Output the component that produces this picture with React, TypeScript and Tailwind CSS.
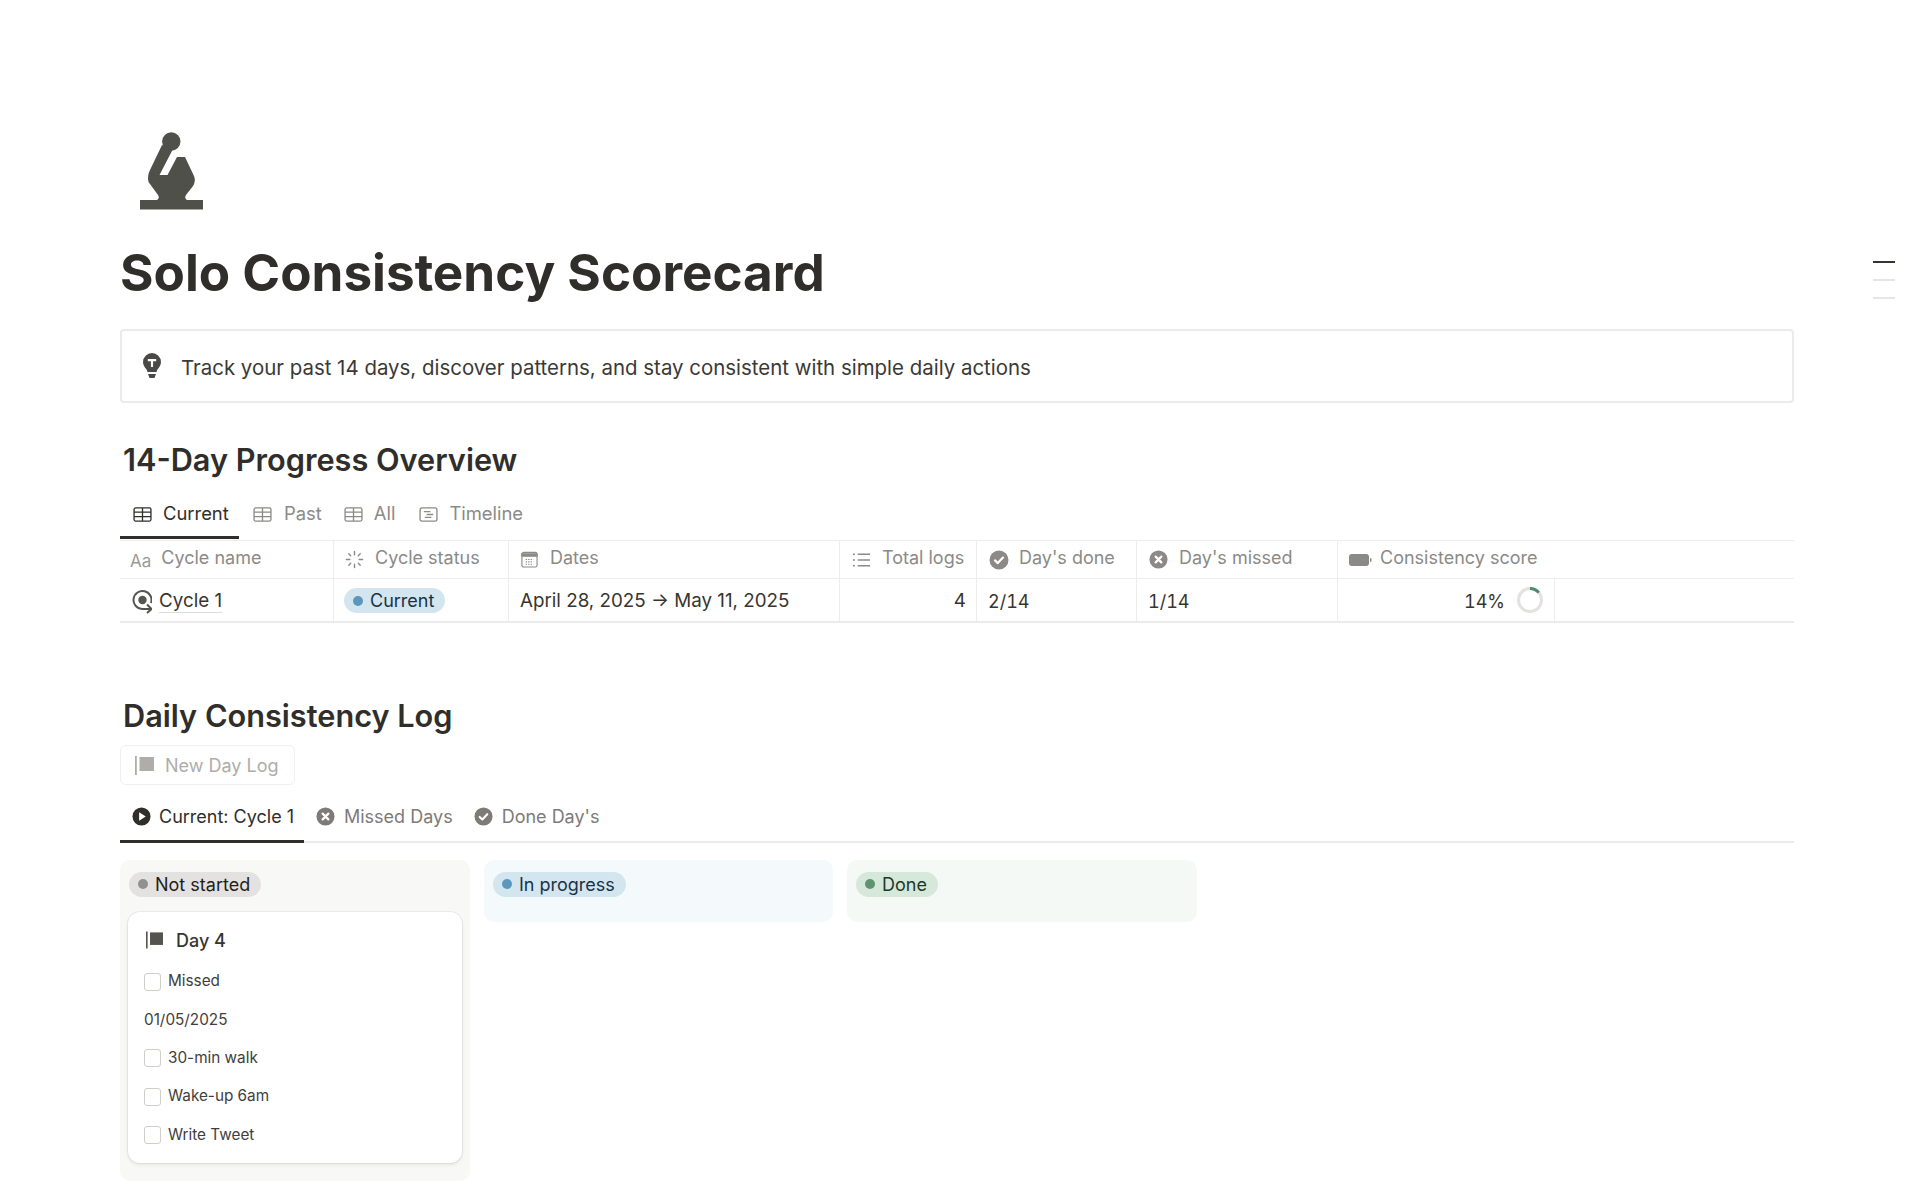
import type { ReactNode } from 'react'

const font = { fontFamily: 'Inter, "Noto Sans", sans-serif' }

const TableIcon = ({ className = '' }: { className?: string }) => (
  <svg viewBox="0 0 20 16" className={`h-[15px] w-[19px] ${className}`} fill="none" stroke="currentColor" strokeWidth="1.4">
    <rect x="1" y="1" width="18" height="14" rx="1.6" />
    <path d="M1 5.500h18M1 10.200h18M10 1V15" />
  </svg>
)

const TimelineIcon = () => (
  <svg viewBox="0 0 20 16" className="h-[15px] w-[19px]" fill="none" stroke="currentColor" strokeWidth="1.4">
    <rect x="1" y="1" width="18" height="14" rx="2" />
    <path d="M5 5h7M8 8h7M6 11h7" />
  </svg>
)

const CheckCircle = ({ className = '' }: { className?: string }) => (
  <svg viewBox="0 0 20 20" className={className}>
    <circle cx="10" cy="10" r="9.500" fill="currentColor" />
    <path d="M6 10.400l2.800 2.700L14 7.600" fill="none" stroke="#fff" strokeWidth="2.200" strokeLinecap="round" strokeLinejoin="round" />
  </svg>
)

const CrossCircle = ({ className = '' }: { className?: string }) => (
  <svg viewBox="0 0 20 20" className={className}>
    <circle cx="10" cy="10" r="9.500" fill="currentColor" />
    <path d="M7 7l6 6M13 7l-6 6" fill="none" stroke="#fff" strokeWidth="2.400" strokeLinecap="round" />
  </svg>
)

const FlagIcon = ({ className = '' }: { className?: string }) => (
  <svg viewBox="0 0 19 19" className={className} fill="currentColor">
    <rect x="0" y="0" width="1.800" height="19" />
    <rect x="4.500" y="1" width="14.500" height="14" />
  </svg>
)

const ColHead = ({ width, icon, label, last }: { width: string; icon: ReactNode; label: string; last?: boolean }) => (
  <div className={`flex h-full items-center ${width} ${last ? '' : 'border-r border-[#ededec]'} text-[#8b8a87]`}>
    {icon}
    <span className="-mt-[3px] text-[18px] leading-none">{label}</span>
  </div>
)

const Pill = ({ bg, dot, color, label }: { bg: string; dot: string; color: string; label: string }) => (
  <span className={`inline-flex h-[25px] items-center gap-[7px] rounded-full pl-[9px] pr-[11px] text-[18px] ${bg} ${color}`}>
    <span className={`h-[10px] w-[10px] rounded-full ${dot}`} />
    {label}
  </span>
)

const CheckRow = ({ label }: { label: string }) => (
  <div className="flex h-[38.400px] items-center gap-[7px] text-[15.300px] text-[#3f3e3b]">
    <span className="h-[18px] w-[17px] rounded-[3px] border border-[#cfcecb]" />
    {label}
  </div>
)

const App = () => {
  return (
    <div style={font} className="relative h-[1199px] overflow-hidden bg-white text-[#2f2e2b]">
      {/* outline marks on the right */}
      <div className="absolute right-[25px] top-[261px] flex w-[22px] flex-col gap-[16px]">
        <div className="h-[2px] bg-[#37352f]" />
        <div className="h-[2px] bg-[#e6e6e4]" />
        <div className="h-[2px] bg-[#e6e6e4]" />
      </div>

      <div className="ml-[120px] w-[1674px] pt-[132px]">
        <svg viewBox="0 0 63 80" className="ml-[20px] h-[80px] w-[63px] text-[#50504a]" fill="currentColor">
          <circle cx="31.300" cy="9.500" r="9.200" />
          <path d="M22 13L10 38Q7 44 8.500 50L18 63Q20 66 17 68H0V77.500H63V68H47Q44 66 46 63L53 54Q56 49 54 44L45 25H37L27.500 43H19.500L33 17Z" />
        </svg>

        <h1 className="mt-[31px] text-[51.200px] font-bold leading-[58px] text-[#2f2e2b]">Solo Consistency Scorecard</h1>

        <div className="mt-[28px] flex h-[74px] items-center rounded-[4px] border-2 border-[#ebebea] pl-[21px]">
          <svg viewBox="0 0 18 26" className="h-[26px] w-[18px] text-[#4a4945]" fill="currentColor">
            <path d="M9 0a9 9 0 0 1 9 9c0 3.500-2 5.500-3.500 7.500-.5.800-.8 1.700-.9 2.500H4.400c-.1-.8-.4-1.700-.9-2.500C2 14.500 0 12.500 0 9a9 9 0 0 1 9-9z" />
            <path d="M5 21h8l-1.500 4h-5z" />
            <path d="M4.800 6h8.400v2.200h-3.100V14H7.900V8.200H4.800z" fill="#fff" />
          </svg>
          <span className="ml-[20px] mt-[4px] text-[20.450px] text-[#3a3936]">Track your past 14 days, discover patterns, and stay consistent with simple daily actions</span>
        </div>

        <h2 className="ml-[3px] mt-[39px] text-[30.700px] font-semibold leading-[36px] text-[#2f2e2b]">14-Day Progress Overview</h2>

        <div className="mt-[18px] flex h-[43px] items-start text-[18.400px] text-[#8b8a87]">
          <div className="flex h-[43px] w-[119px] items-center gap-[11px] border-b-[3px] border-[#2f2e2b] pb-[4px] pl-[13px] text-[#2f2e2b]">
            <TableIcon />
            Current
          </div>
          <div className="ml-[14px] flex h-[43px] items-center gap-[12px] border-b-[3px] border-transparent pb-[4px]"><TableIcon />Past</div>
          <div className="ml-[22px] flex h-[43px] items-center gap-[11px] border-b-[3px] border-transparent pb-[4px]"><TableIcon />All</div>
          <div className="ml-[24px] flex h-[43px] items-center gap-[11px] border-b-[3px] border-transparent pb-[4px]"><TimelineIcon />Timeline</div>
        </div>

        <div className="mt-[1px] flex h-[39px] items-center border-y border-[#ededec]">
          <ColHead
            width="w-[214px]"
            label="Cycle name"
            icon={<span className="ml-[10px] mr-[10px] mt-[4px] text-[17px] leading-none text-[#9b9a97]">Aa</span>}
          />
          <ColHead
            width="w-[175px]"
            label="Cycle status"
            icon={
              <svg viewBox="0 0 20 20" className="ml-[11px] mr-[11px] h-[19px] w-[19px] shrink-0" fill="none" stroke="currentColor" strokeWidth="1.500" strokeLinecap="round">
                <path d="M10 1.500v3.500M10 15v3.500M1.500 10H5M15 10h3.500M4 4l2 2M14 14l2 2M4 16l2-2M14 6l2-2" />
              </svg>
            }
          />
          <ColHead
            width="w-[331px]"
            label="Dates"
            icon={
              <svg viewBox="0 0 18 18" className="ml-[12px] mr-[12px] h-[17px] w-[17px] shrink-0" fill="none" stroke="currentColor" strokeWidth="1.200">
                <rect x="1" y="1.500" width="16" height="15.500" rx="2" />
                <path d="M1 3h16v2.500H1z" fill="currentColor" />
                <path d="M5 9h8M5 11.500h8M5 14h8" strokeDasharray="1.400 1.200" />
              </svg>
            }
          />
          <ColHead
            width="w-[137px]"
            label="Total logs"
            icon={
              <svg viewBox="0 0 20 18" className="ml-[12px] mr-[11px] h-[18px] w-[19px] shrink-0" fill="none" stroke="currentColor" strokeWidth="1.700">
                <path d="M6 3h13M6 9h13M6 15h13M1 3h2M1 9h2M1 15h2" />
              </svg>
            }
          />
          <ColHead width="w-[160px]" label="Day's done" icon={<CheckCircle className="ml-[12px] mr-[10px] h-[20px] w-[20px] shrink-0" />} />
          <ColHead width="w-[201px]" label="Day's missed" icon={<CrossCircle className="ml-[12px] mr-[11px] h-[19px] w-[19px] shrink-0" />} />
          <ColHead
            width="flex-1"
            label="Consistency score"
            last
            icon={
              <svg viewBox="0 0 23 12" className="ml-[11px] mr-[8px] h-[12px] w-[23px] shrink-0" fill="currentColor">
                <rect x="0" y="0" width="20" height="12" rx="3" />
                <rect x="21" y="4" width="1.500" height="4" rx="0.700" />
              </svg>
            }
          />
        </div>

        <div className="flex h-[44px] items-center border-b-2 border-[#ebebea] text-[18.800px] text-[#37352f]">
          <div className="flex h-full w-[214px] items-center border-r border-[#ededec]">
            <svg viewBox="0 0 20 25" className="ml-[12px] mr-[7px] mt-[2px] h-[25px] w-[20px] shrink-0 text-[#55544f]" fill="none" stroke="currentColor" strokeWidth="2">
              <path d="M19 14A9 9 0 1 0 10 20H19" />
              <circle cx="10.500" cy="11" r="4.200" fill="currentColor" stroke="none" />
              <path d="M15 15.500L19.500 20L15 24" />
            </svg>
            <span className="mt-[3px] border-b border-[#dcdcda] leading-[22px]">Cycle 1</span>
          </div>
          <div className="flex h-full w-[175px] items-center border-r border-[#ededec] pl-[10px] pt-[1px]">
            <Pill bg="bg-[#d3e5ef]" dot="bg-[#5b97bd]" color="text-[#183347]" label="Current" />
          </div>
          <div className="flex h-full w-[331px] items-center border-r border-[#ededec] pl-[11px] pt-[3px]">April 28, 2025 → May 11, 2025</div>
          <div className="flex h-full w-[137px] items-center justify-end border-r border-[#ededec] pr-[10px] pt-[3px]">4</div>
          <div className="flex h-full w-[160px] items-center border-r border-[#ededec] pl-[11px] pt-[3px] text-[18px] tabular-nums">2/14</div>
          <div className="flex h-full w-[201px] items-center border-r border-[#ededec] pl-[11px] pt-[3px] text-[18px] tabular-nums">1/14</div>
          <div className="flex h-full w-[217px] items-center justify-end gap-[12px] border-r border-[#ededec] pr-[11px] text-[18px] tabular-nums">
            <span className="mt-[3px]">14%</span>
            <svg viewBox="0 0 26 26" className="-mt-[1px] h-[26px] w-[26px]" fill="none" strokeWidth="3">
              <circle cx="13" cy="13" r="11.500" stroke="#e3e2e0" />
              <path d="M13 1.500A11.500 11.500 0 0 1 21.800 5.600" stroke="#4f8a6c" />
            </svg>
          </div>
        </div>

        <h2 className="ml-[3px] mt-[75px] text-[30.700px] font-semibold leading-[36px] text-[#2f2e2b]">Daily Consistency Log</h2>

        <div className="mt-[11px] flex h-[40px] w-[175px] items-center gap-[11px] rounded-[6px] border border-[#f0f0ef] pl-[14px] text-[18px] text-[#aeadaa]">
          <FlagIcon className="h-[19px] w-[19px]" />
          New Day Log
        </div>

        <div className="mt-[11px] flex h-[47px] items-start border-b-2 border-[#ebebea] text-[18px] text-[#7c7b78]">
          <div className="flex h-[47px] w-[184px] items-center gap-[8px] border-b-[3px] border-[#2f2e2b] pb-[4px] pl-[12px] text-[#2f2e2b]">
            <svg viewBox="0 0 20 20" className="h-[19px] w-[19px]">
              <circle cx="10" cy="10" r="9.500" fill="currentColor" />
              <path d="M7.500 5.500l7 4.500-7 4.500z" fill="#fff" />
            </svg>
            Current: Cycle 1
          </div>
          <div className="ml-[12px] flex h-[47px] items-center gap-[9px] border-b-[3px] border-transparent pb-[4px]"><CrossCircle className="h-[19px] w-[19px]" />Missed Days</div>
          <div className="ml-[21px] flex h-[47px] items-center gap-[9px] border-b-[3px] border-transparent pb-[4px]"><CheckCircle className="h-[19px] w-[19px]" />Done Day's</div>
        </div>

        <div className="mt-[17px] flex items-start gap-[14px]">
          <div className="w-[350px] rounded-[10px] bg-[#f8f8f7] px-[8px] pb-[18px] pt-[11px]">
            <div className="ml-[1px] h-[25px]">
              <Pill bg="bg-[#e3e2e0]" dot="bg-[#91918e]" color="text-[#1f1e1c]" label="Not started" />
            </div>
            <div className="mt-[16px] h-[251px] rounded-[12px] bg-white px-[16px] pt-[13px] shadow-[0_0_0_1px_rgba(15,15,15,0.05),0_2px_4px_rgba(15,15,15,0.08)]">
              <div className="flex h-[30px] items-center gap-[13px] pl-[2px] text-[18px] font-medium text-[#37352f]">
                <FlagIcon className="h-[18px] w-[17px] text-[#55544f]" />
                Day 4
              </div>
              <div className="mt-[7.500px]">
                <CheckRow label="Missed" />
                <div className="flex h-[38.400px] items-center text-[15.300px] text-[#3f3e3b]">01/05/2025</div>
                <CheckRow label="30-min walk" />
                <CheckRow label="Wake-up 6am" />
                <CheckRow label="Write Tweet" />
              </div>
            </div>
          </div>
          <div className="h-[62px] w-[349px] rounded-[10px] bg-[#f4f9fc] px-[9px] pt-[11px]">
            <Pill bg="bg-[#d3e5ef]" dot="bg-[#5b97bd]" color="text-[#183347]" label="In progress" />
          </div>
          <div className="h-[62px] w-[350px] rounded-[10px] bg-[#f5f9f5] px-[9px] pt-[11px]">
            <Pill bg="bg-[#d6e8d9]" dot="bg-[#5f9470]" color="text-[#1c3829]" label="Done" />
          </div>
        </div>
      </div>
    </div>
  )
}

export default App
